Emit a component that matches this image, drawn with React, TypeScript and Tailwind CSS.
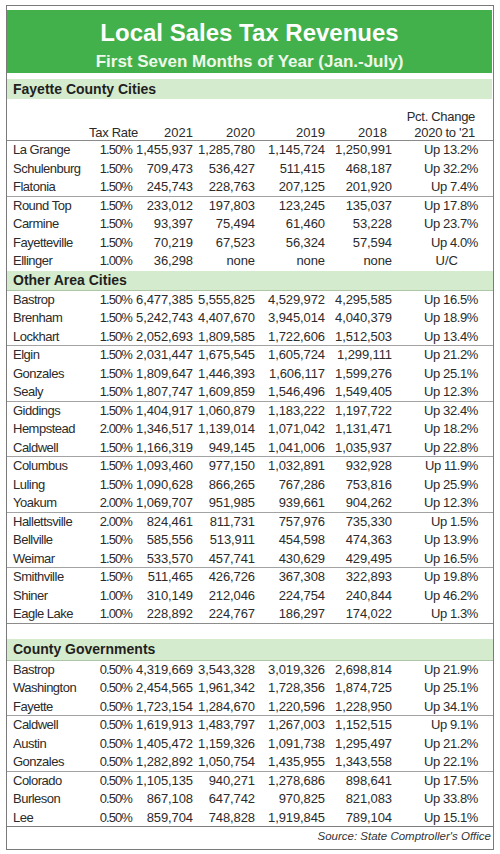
type Row = [string, string, string, string, string, string, string];

const fayette: Row[][] = [
  [
    ['La Grange', '1.50%', '1,455,937', '1,285,780', '1,145,724', '1,250,991', 'Up 13.2%'],
    ['Schulenburg', '1.50%', '709,473', '536,427', '511,415', '468,187', 'Up 32.2%'],
    ['Flatonia', '1.50%', '245,743', '228,763', '207,125', '201,920', 'Up 7.4%'],
  ],
  [
    ['Round Top', '1.50%', '233,012', '197,803', '123,245', '135,037', 'Up 17.8%'],
    ['Carmine', '1.50%', '93,397', '75,494', '61,460', '53,228', 'Up 23.7%'],
    ['Fayetteville', '1.50%', '70,219', '67,523', '56,324', '57,594', 'Up 4.0%'],
    ['Ellinger', '1.00%', '36,298', 'none', 'none', 'none', 'U/C'],
  ],
];

const otherCities: Row[][] = [
  [
    ['Bastrop', '1.50%', '6,477,385', '5,555,825', '4,529,972', '4,295,585', 'Up 16.5%'],
    ['Brenham', '1.50%', '5,242,743', '4,407,670', '3,945,014', '4,040,379', 'Up 18.9%'],
    ['Lockhart', '1.50%', '2,052,693', '1,809,585', '1,722,606', '1,512,503', 'Up 13.4%'],
  ],
  [
    ['Elgin', '1.50%', '2,031,447', '1,675,545', '1,605,724', '1,299,111', 'Up 21.2%'],
    ['Gonzales', '1.50%', '1,809,647', '1,446,393', '1,606,117', '1,599,276', 'Up 25.1%'],
    ['Sealy', '1.50%', '1,807,747', '1,609,859', '1,546,496', '1,549,405', 'Up 12.3%'],
  ],
  [
    ['Giddings', '1.50%', '1,404,917', '1,060,879', '1,183,222', '1,197,722', 'Up 32.4%'],
    ['Hempstead', '2.00%', '1,346,517', '1,139,014', '1,071,042', '1,131,471', 'Up 18.2%'],
    ['Caldwell', '1.50%', '1,166,319', '949,145', '1,041,006', '1,035,937', 'Up 22.8%'],
  ],
  [
    ['Columbus', '1.50%', '1,093,460', '977,150', '1,032,891', '932,928', 'Up 11.9%'],
    ['Luling', '1.50%', '1,090,628', '866,265', '767,286', '753,816', 'Up 25.9%'],
    ['Yoakum', '2.00%', '1,069,707', '951,985', '939,661', '904,262', 'Up 12.3%'],
  ],
  [
    ['Hallettsville', '2.00%', '824,461', '811,731', '757,976', '735,330', 'Up 1.5%'],
    ['Bellville', '1.50%', '585,556', '513,911', '454,598', '474,363', 'Up 13.9%'],
    ['Weimar', '1.50%', '533,570', '457,741', '430,629', '429,495', 'Up 16.5%'],
  ],
  [
    ['Smithville', '1.50%', '511,465', '426,726', '367,308', '322,893', 'Up 19.8%'],
    ['Shiner', '1.00%', '310,149', '212,046', '224,754', '240,844', 'Up 46.2%'],
    ['Eagle Lake', '1.00%', '228,892', '224,767', '186,297', '174,022', 'Up 1.3%'],
  ],
];

const counties: Row[][] = [
  [
    ['Bastrop', '0.50%', '4,319,669', '3,543,328', '3,019,326', '2,698,814', 'Up 21.9%'],
    ['Washington', '0.50%', '2,454,565', '1,961,342', '1,728,356', '1,874,725', 'Up 25.1%'],
    ['Fayette', '0.50%', '1,723,154', '1,284,670', '1,220,596', '1,228,950', 'Up 34.1%'],
  ],
  [
    ['Caldwell', '0.50%', '1,619,913', '1,483,797', '1,267,003', '1,152,515', 'Up 9.1%'],
    ['Austin', '0.50%', '1,405,472', '1,159,326', '1,091,738', '1,295,497', 'Up 21.2%'],
    ['Gonzales', '0.50%', '1,282,892', '1,050,754', '1,435,955', '1,343,558', 'Up 22.1%'],
  ],
  [
    ['Colorado', '0.50%', '1,105,135', '940,271', '1,278,686', '898,641', 'Up 17.5%'],
    ['Burleson', '0.50%', '867,108', '647,742', '970,825', '821,083', 'Up 33.8%'],
    ['Lee', '0.50%', '859,704', '748,828', '1,919,845', '789,104', 'Up 15.1%'],
  ],
];

const cols = 'grid grid-cols-[80px_46px_60px_62px_70px_67px_86px]';

function DataRow({ row, divider }: { row: Row; divider?: string }) {
  const [name, rate, y21, y20, y19, y18, pct] = row;
  return (
    <div className={`${cols} h-[18.5px] leading-[18.5px] ${divider ?? ''}`}>
      <div className="pl-[6px] tracking-[-0.5px]">{name}</div>
      <div className="text-right tracking-[-0.9px] pr-[1px]">{rate}</div>
      <div className="text-right tracking-[-0.1px]">{y21}</div>
      <div className="text-right tracking-[-0.1px]">{y20}</div>
      <div className="text-right tracking-[-0.1px]">{y19}</div>
      <div className="text-right tracking-[-0.1px]">{y18}</div>
      {pct === 'U/C' ? (
        <div className="text-right pr-[20px]">{pct}</div>
      ) : (
        <div className="text-right tracking-[-0.4px]">{pct}</div>
      )}
    </div>
  );
}

function Groups({ groups, endLine }: { groups: Row[][]; endLine: string }) {
  return (
    <div>
      {groups.map((group, gi) =>
        group.map((row, ri) => {
          const lastInGroup = ri === group.length - 1;
          const lastGroup = gi === groups.length - 1;
          let divider = '';
          if (lastInGroup && !lastGroup) divider = 'border-b border-[#a3a3a3]';
          if (lastInGroup && lastGroup) divider = endLine;
          return <DataRow key={`${gi}-${ri}`} row={row} divider={divider} />;
        })
      )}
    </div>
  );
}

function Band({ title, className }: { title: string; className?: string }) {
  return (
    <div className={`bg-[#d5ebcd] pl-[6px] font-bold text-[14px] text-[#1f1f1f] ${className ?? ''}`}>
      {title}
    </div>
  );
}

export default function App() {
  return (
    <div className="w-[500px] h-[854px] bg-white pt-[5px] pl-[6px] font-['Liberation_Sans',Arial,sans-serif] text-[13px] text-[#2b2b2b]">
      <div className="w-[488px] border border-[#7a7a7a] pt-[4px]">
        {/* Title */}
        <div className="h-[63px] mr-[1px] bg-[#42b14b] pt-[9px] text-center font-bold">
          <div className="text-[24px] leading-[28px] text-white">Local Sales Tax Revenues</div>
          <div className="mt-[5px] text-[17px] leading-[20px] text-[#eef8ea]">
            First Seven Months of Year (Jan.-July)
          </div>
        </div>

        <Band title="Fayette County Cities" className="mt-[6px] mr-[1px] h-[20px] leading-[20px]" />

        {/* Column headers */}
        <div className="h-[42px] pt-[10px] border-b border-[#8a8a8a]">
          <div className={`${cols} h-[16px] leading-[16px]`}>
            <div className="col-start-7 text-right pr-[3px] tracking-[-0.3px]">Pct. Change</div>
          </div>
          <div className={`${cols} h-[15px] leading-[15px]`}>
            <div />
            <div className="text-right -mr-[5px] tracking-[-0.3px]">Tax Rate</div>
            <div className="text-right">2021</div>
            <div className="text-right">2020</div>
            <div className="text-right">2019</div>
            <div className="text-right pr-[5px]">2018</div>
            <div className="text-right pr-[3px] tracking-[-0.3px]">2020 to '21</div>
          </div>
        </div>

        <Groups groups={fayette} endLine="" />

        <Band
          title="Other Area Cities"
          className="h-[20px] leading-[19px] border-b border-[#aec6a8]"
        />
        <Groups groups={otherCities} endLine="border-b border-[#8c8c8c]" />

        <div className="h-[15px]" />

        <Band
          title="County Governments"
          className="h-[22px] leading-[21px] border-b border-[#aec6a8]"
        />
        <Groups groups={counties} endLine="border-b border-[#7d7d7d]" />

        {/* Source */}
        <div className="h-[22px] pr-[2px] text-right italic text-[11.5px] leading-[18px] text-[#333]">
          Source: State Comptroller's Office
        </div>
      </div>
    </div>
  );
}
